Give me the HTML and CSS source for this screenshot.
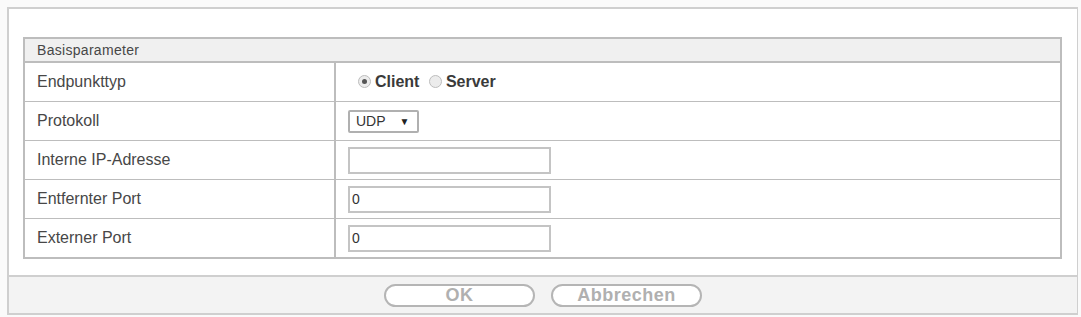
FILE: index.html
```html
<!DOCTYPE html>
<html lang="de">
<head>
<meta charset="UTF-8">
<title>Basisparameter</title>
<link rel="stylesheet" href="styles.css">
</head>
<body>
  <div class="frame">
    <table class="params">
      <tr class="head">
        <td colspan="2">Basisparameter</td>
      </tr>
      <tr>
        <td class="label">Endpunkttyp</td>
        <td class="value">
          <span class="radio checked first"></span><span class="radio-text">Client</span>
          <span class="radio"></span><span class="radio-text">Server</span>
        </td>
      </tr>
      <tr>
        <td class="label">Protokoll</td>
        <td class="value">
          <div class="select">UDP <span class="arrow">&#9660;</span></div>
        </td>
      </tr>
      <tr>
        <td class="label">Interne IP-Adresse</td>
        <td class="value"><input class="field" type="text" value=""></td>
      </tr>
      <tr>
        <td class="label">Entfernter Port</td>
        <td class="value"><input class="field" type="text" value="0"></td>
      </tr>
      <tr>
        <td class="label">Externer Port</td>
        <td class="value"><input class="field" type="text" value="0"></td>
      </tr>
    </table>
    <div class="footer">
      <button class="pill" disabled>OK</button>
      <button class="pill" disabled>Abbrechen</button>
    </div>
  </div>
</body>
</html>
```
FILE: styles.css
```css
body {
  margin: 0;
  padding: 0;
  background-color: #fafafa;
  font-family: "Liberation Sans", Arial, sans-serif;
  color: #474747;
}

/* outer box */
.frame {
  margin: 7px 3px 2px 7px;
  width: 1071px;
  height: 308px;
  box-sizing: border-box;
  border: 2px solid #cfcfcf;
  border-right-width: 1px;
  background-color: #fff;
  padding-top: 28px;
  display: flex;
  flex-direction: column;
}

.params {
  margin: 0 15px 0 14px;
  border-collapse: collapse;
  border: 2px solid #bdbdbd;
  font-size: 16px;
}

.params td {
  border: 1px solid #bdbdbd;
  padding: 0;
}

.head td {
  height: 22px;
  background-color: #f0f0f0;
  font-size: 14px;
  letter-spacing: 0.3px;
  padding-left: 12px;
  border-bottom-width: 2px;
}

.label {
  width: 297px;
  height: 38px;
  padding-left: 12px !important;
  border-right-width: 2px !important;
}

.value {
  padding-left: 12px !important;
}

/* radio buttons */
.radio {
  display: inline-block;
  width: 13px;
  height: 13px;
  border-radius: 50%;
  border: 1px solid #bdbdbd;
  background-color: #ececec;
  box-sizing: border-box;
  vertical-align: -1px;
  position: relative;
  margin-left: 5px;
}

.radio.first {
  margin-left: 10px;
}

.radio.checked::after {
  content: "";
  position: absolute;
  left: 3px;
  top: 3px;
  width: 5px;
  height: 5px;
  border-radius: 50%;
  background-color: #555;
}

.radio-text {
  font-weight: bold;
  font-size: 16px;
  margin-left: 4px;
  color: #3a3a3a;
}

/* select box */
.select {
  display: inline-flex;
  align-items: center;
  width: 71px;
  height: 23px;
  box-sizing: border-box;
  border: 2px solid #b0b0b0;
  border-radius: 2px;
  padding-left: 6px;
  font-size: 14px;
  color: #333;
  vertical-align: middle;
}

.arrow {
  font-size: 10px;
  margin-left: 14px;
  color: #222;
}

.field {
  width: 203px;
  height: 27px;
  box-sizing: border-box;
  border: 2px solid #c4c4c4;
  font-family: "Liberation Sans", Arial, sans-serif;
  font-size: 14px;
  color: #333;
  padding: 0 2px;
  margin: 0;
  vertical-align: middle;
}

/* button bar */
.footer {
  margin-top: auto;
  height: 36px;
  border-top: 2px solid #cfcfcf;
  background-color: #f3f3f3;
  display: flex;
  justify-content: center;
  align-items: center;
  gap: 16px;
}

.pill {
  width: 151px;
  height: 23px;
  border: 2px solid #b5b5b5;
  border-radius: 12px;
  background-color: #fff;
  color: #b0b0b0;
  font-family: "Liberation Sans", Arial, sans-serif;
  font-weight: bold;
  font-size: 18px;
  letter-spacing: 0.5px;
  line-height: 19px;
  padding: 0;
}
```
